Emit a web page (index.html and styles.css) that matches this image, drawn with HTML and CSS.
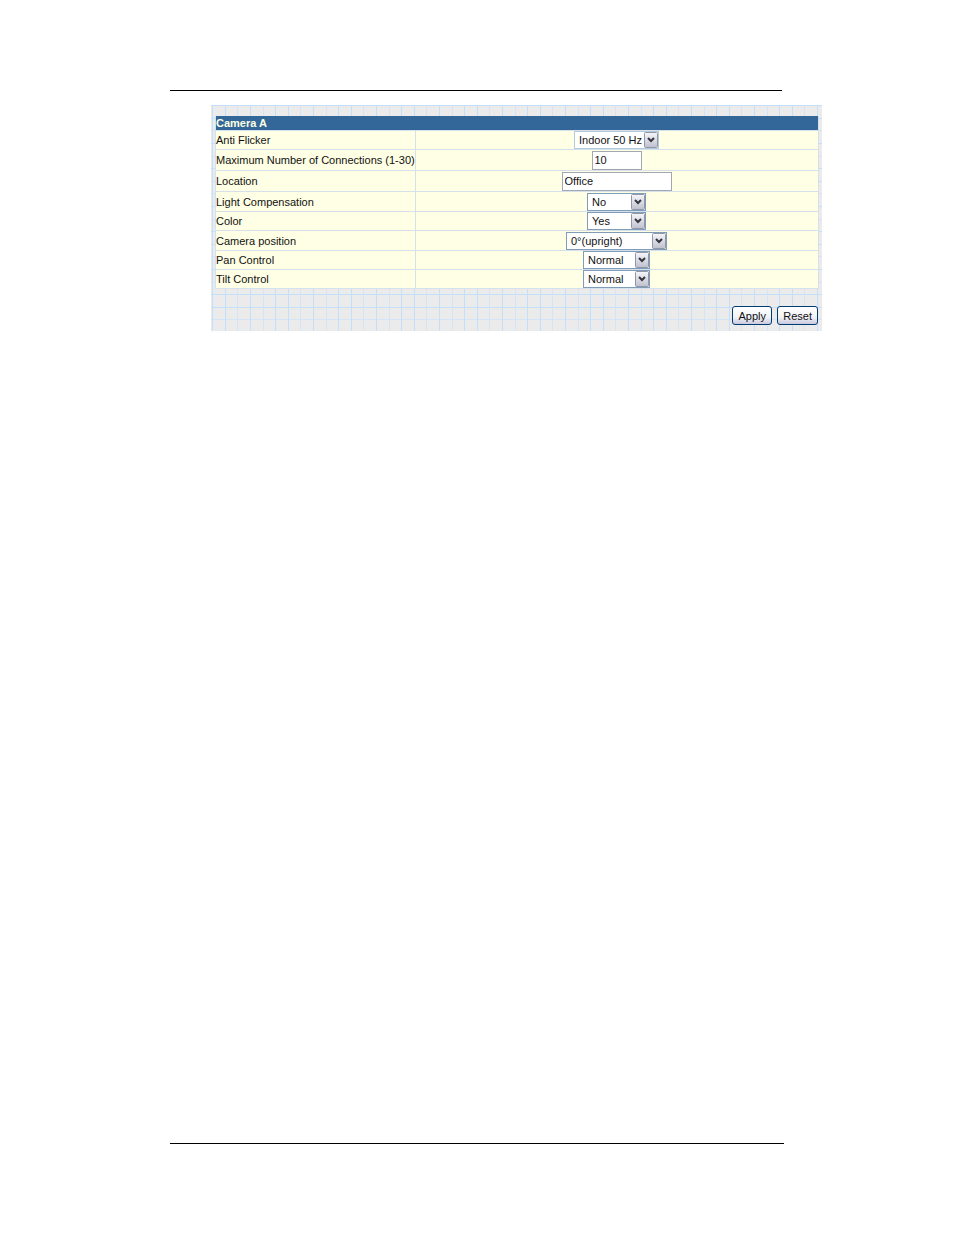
FILE: index.html
```html
<!DOCTYPE html>
<html lang="en">
<head>
<meta charset="utf-8">
<title>Camera A</title>
<link rel="stylesheet" href="styles.css">
</head>
<body class="page">
<hr class="rule rule-top">
<main class="content">
<form class="panel">
<table class="settings">
<colgroup>
<col class="name-column">
<col>
</colgroup>
<thead>
<tr><th colspan="2" scope="colgroup">Camera A</th></tr>
</thead>
<tbody>
<tr><td class="name"><label for="flicker">Anti Flicker</label></td><td class="value"><select id="flicker" class="field select w-flicker"><option>Indoor 50 Hz</option></select></td></tr>
<tr class="tall"><td class="name"><label for="connections">Maximum Number of Connections (1-30)</label></td><td class="value"><input id="connections" class="field text w-number" type="text" value="10"></td></tr>
<tr class="tall"><td class="name"><label for="location">Location</label></td><td class="value"><input id="location" class="field text w-location" type="text" value="Office"></td></tr>
<tr class="medium"><td class="name"><label for="light">Light Compensation</label></td><td class="value"><select id="light" class="field select w-yesno"><option>No</option><option>Yes</option></select></td></tr>
<tr><td class="name"><label for="color">Color</label></td><td class="value"><select id="color" class="field select w-yesno"><option>Yes</option><option>No</option></select></td></tr>
<tr class="medium"><td class="name"><label for="position">Camera position</label></td><td class="value"><select id="position" class="field select w-position"><option>0°(upright)</option></select></td></tr>
<tr><td class="name"><label for="pan">Pan Control</label></td><td class="value"><select id="pan" class="field select w-normal"><option>Normal</option></select></td></tr>
<tr><td class="name"><label for="tilt">Tilt Control</label></td><td class="value"><select id="tilt" class="field select w-normal"><option>Normal</option></select></td></tr>
</tbody>
</table>
<div class="actions">
<button class="button" type="submit">Apply</button>
<button class="button" type="reset">Reset</button>
</div>
</form>
</main>
<hr class="rule rule-bottom">
</body>
</html>
```
FILE: styles.css
```css
* { box-sizing: border-box; }

.page {
  display: flex;
  flex-direction: column;
  min-height: 100vh;
  margin: 0;
  padding: 90px 132px 91px 170px;
  background: #fff;
  color: #111;
  font: 11px/16px "Liberation Sans", Arial, sans-serif;
}

.rule {
  height: 1px;
  margin: 0;
  border: 0;
  background: #000;
}
.rule-top { margin-right: 40px; }
.rule-bottom { margin-right: 38px; }

.content {
  flex: 1;
  padding: 14px 0 0 41px;
}

/* Graph-paper backdrop: five lines per 63px tile */
.panel {
  padding: 11px 3px 6px 4px;
  background-color: #ebebeb;
  background-image:
    linear-gradient(90deg, transparent 1px, #c4dffa 1px 2px, transparent 2px 14px, #c4dffa 14px 15px, transparent 15px 26px, #d2e4f5 26px 27px, transparent 27px 39px, #c4dffa 39px 40px, transparent 40px 52px, #d2e4f5 52px 53px, transparent 53px),
    linear-gradient(#c4dffa 1px, transparent 1px 13px, #c4dffa 13px 14px, transparent 14px 25px, #d2e4f5 25px 26px, transparent 26px 38px, #c4dffa 38px 39px, transparent 39px 51px, #d2e4f5 51px 52px, transparent 52px);
  background-size: 63px 63px;
}

.settings {
  width: 100%;
  table-layout: fixed;
  border-spacing: 0;
  border: 1px solid #d6e0ea;
  border-top: 0;
}
.name-column { width: 200px; }
.settings th {
  height: 14px;
  padding: 0;
  background: #336699;
  color: #ffffe5;
  line-height: 14px;
  text-align: left;
}
.settings td {
  height: 19px;
  padding: 0;
  border-top: 1px solid #d6e0ea;
  background: #ffffe5;
  line-height: 18px;
}
.settings tr.medium td { height: 20px; }
.settings tr.tall td { height: 21px; }
.settings .name {
  border-right: 1px solid #d6e0ea;
  white-space: nowrap;
}
.settings .value { padding-right: 1px; }

.field {
  display: block;
  height: 18px;
  margin: 0 auto;
  border: 1px solid #7f9db9;
  border-radius: 0;
  background: #fff;
  color: #111;
  font: 11px/16px "Liberation Sans", Arial, sans-serif;
}
.text {
  height: 19px;
  padding: 0 2px;
  border-color: #a2a8b2;
}
.select {
  appearance: none;
  padding: 0 15px 0 4px;
  background:
    url("data:image/svg+xml,%3Csvg xmlns='http://www.w3.org/2000/svg' width='14' height='16'%3E%3Cdefs%3E%3ClinearGradient id='g' x2='0' y2='1'%3E%3Cstop stop-color='%23f6f6fa'/%3E%3Cstop offset='1' stop-color='%23bfc0ce'/%3E%3C/linearGradient%3E%3C/defs%3E%3Crect x='.5' y='.5' width='13' height='15' rx='1' fill='url(%23g)' stroke='%239097a8'/%3E%3Cpath d='M4 6l3 3 3-3' fill='none' stroke='%23353540' stroke-width='2'/%3E%3C/svg%3E") right center no-repeat #fff;
}
.w-flicker { width: 85px; border-color: #b3c9de; }
.w-number { width: 50px; }
.w-location { width: 110px; }
.w-yesno { width: 59px; }
.w-position { width: 101px; }
.w-normal { width: 67px; }

.actions {
  display: flex;
  justify-content: flex-end;
  gap: 5px;
  margin-top: 17px;
  padding-right: 1px;
}
.button {
  min-width: 40px;
  height: 19px;
  padding: 0 5px;
  border: 1px solid #003c74;
  border-radius: 3px;
  background: linear-gradient(#fff, #f2f2f7 60%, #c9c9dc);
  color: #111;
  font: 11px/16px "Liberation Sans", Arial, sans-serif;
}
```
